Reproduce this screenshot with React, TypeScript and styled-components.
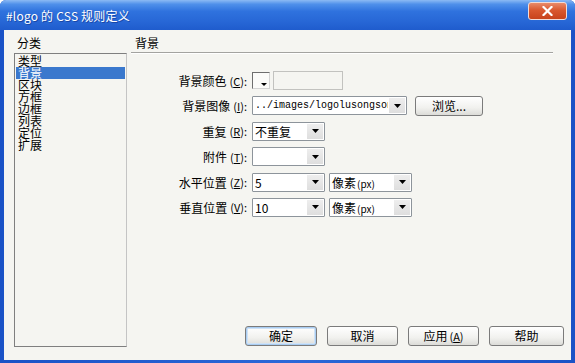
import React, { FC } from "react";
import styled, { createGlobalStyle } from "styled-components";

//styles
const GlobalStyle = createGlobalStyle`
    html, body {
        margin: 0;
        padding: 0;
    }
    body {
        width: 575px;
        height: 363px;
        overflow: hidden;
        background: #ffffff;
        font-family: "Noto Sans CJK SC", "Liberation Sans", sans-serif;
        font-size: 12px;
        color: #000;
    }
`
const Window = styled.div`
    width: 575px;
    height: 363px;
    display: flex;
    flex-direction: column;
    background: linear-gradient(to right, #1a52c6, #2b68d8 50%, #1a52c6);
    border-radius: 6px 6px 0 0;
    overflow: hidden;
`
const TitleBar = styled.div`
    height: 30px;
    flex: none;
    display: flex;
    justify-content: space-between;
    align-items: flex-start;
    padding: 0 8px 0 6px;
    background: linear-gradient(to bottom, #8cbaf4 0%, #4f90ea 14%, #2f72de 38%, #2767d6 72%, #1f5ccd 100%);
    color: #ffffff;
`
const Title = styled.div`
    margin-top: 9px;
    line-height: 14px;
    letter-spacing: 0.2px;
    text-shadow: 1px 1px 0 rgba(10, 40, 120, 0.5);
`
const CloseButton = styled.div`
    width: 39px;
    height: 18px;
    margin-top: 2px;
    box-sizing: border-box;
    border: 1px solid #f2dcd6;
    border-radius: 3px;
    background: linear-gradient(to bottom, #e98b6a 0%, #d9582f 45%, #c8431c 100%);
    display: flex;
    justify-content: center;
    align-items: center;
`
const Body = styled.div`
    flex: 1;
    margin: 0 4px 3px;
    background: #f5f5f1;
    display: flex;
    padding: 7px 0 0 10px;
`
const LeftColumn = styled.div`
    width: 113px;
    display: flex;
    flex-direction: column;
`
const SectionLabel = styled.div<{ $indent?: number }>`
    line-height: 12px;
    height: 12px;
    padding-left: ${(p) => p.$indent ?? 0}px;
`
const ListBox = styled.div`
    margin-top: 4px;
    height: 294px;
    box-sizing: border-box;
    border: 1px solid;
    border-color: #7f7f7f #c4c4c4 #7f7f7f #7f7f7f;
    background: #f5f5f1;
    padding: 1px 1px 0;
`
const ListItem = styled.div<{ $selected?: boolean }>`
    height: 12px;
    line-height: 12px;
    padding-left: 2px;
    background: ${(p) => (p.$selected ? "#3a78cd" : "transparent")};
    color: ${(p) => (p.$selected ? "#ffffff" : "#000000")};
`
const RightColumn = styled.div`
    flex: 1;
    margin-left: 4px;
    display: flex;
    flex-direction: column;
`
const Divider = styled.div`
    margin: 3px 18px 0 0;
    border-top: 1px solid #a3a3a0;
    border-bottom: 1px solid #ffffff;
`
const Form = styled.div`
    margin-top: 17px;
    display: grid;
    grid-template-columns: 116px auto;
    grid-auto-rows: 19px;
    column-gap: 5px;
    row-gap: 6.4px;
    justify-content: start;
`
const FieldLabel = styled.div`
    display: flex;
    justify-content: flex-end;
    align-items: center;
    white-space: nowrap;
`
const Key = styled.span`
    margin-left: 3px;
    font-size: 11px;
`
const Controls = styled.div`
    display: flex;
    align-items: center;
    gap: 4px;
`
const Swatch = styled.div`
    position: relative;
    width: 18px;
    height: 17px;
    box-sizing: border-box;
    border: 1px solid;
    border-color: #6e6e6e #d4d4d4 #d4d4d4 #6e6e6e;
    background: #fbfbf9;
`
const SwatchArrow = styled.span`
    position: absolute;
    right: 2px;
    bottom: 2px;
    width: 0;
    height: 0;
    border-left: 3px solid transparent;
    border-right: 3px solid transparent;
    border-top: 3px solid #000;
`
const ColorInput = styled.div`
    width: 70px;
    height: 19px;
    margin-left: -1px;
    box-sizing: border-box;
    border: 1px solid #c2c2bf;
    background: #f5f5f1;
`
const ComboBox = styled.div<{ $width: number }>`
    width: ${(p) => p.$width}px;
    height: 19px;
    box-sizing: border-box;
    border: 1px solid #8d949b;
    border-radius: 1px;
    background: #ffffff;
    display: flex;
    align-items: stretch;
`
const ComboText = styled.div<{ $mono?: boolean }>`
    flex: 1;
    overflow: hidden;
    white-space: nowrap;
    padding-left: 2px;
    line-height: 17px;
    font-family: ${(p) => (p.$mono ? '"Liberation Mono", monospace' : 'inherit')};
    font-size: ${(p) => (p.$mono ? "10px" : "12px")};
`
const Unit = styled.span`
    font-size: 10px;
    margin-left: 1px;
`
const DropButton = styled.div`
    width: 16px;
    margin: 1px;
    background: linear-gradient(to bottom, #eeeeee, #dedede);
    display: flex;
    justify-content: center;
    align-items: center;
`
const PushButton = styled.div<{ $width: number; $default?: boolean }>`
    width: ${(p) => p.$width}px;
    height: 20px;
    box-sizing: border-box;
    border: 1px solid #7b7b7b;
    border-radius: 3px;
    background: linear-gradient(to bottom, #ffffff 0%, #f1f1ee 60%, #dcdcd8 100%);
    box-shadow: ${(p) => (p.$default ? "inset 0 0 0 1px #a9cdf2, inset 0 0 0 2px #cfe2f6" : "none")};
    display: flex;
    justify-content: center;
    align-items: center;
    line-height: 12px;
`
const Spacer = styled.div`
    flex: 1;
`
const ButtonRow = styled.div`
    display: flex;
    justify-content: flex-end;
    gap: 10px;
    padding-right: 7px;
    margin-bottom: 14px;
`

const categories = ["类型", "背景", "区块", "方框", "边框", "列表", "定位", "扩展"];

const Arrow: FC = () => (
    <svg width="7" height="4" viewBox="0 0 7 4">
        <path d="M0 0h7L3.5 4z" fill="#000" />
    </svg>
);

interface ComboProps {
    width: number;
    value?: React.ReactNode;
    mono?: boolean;
}

const Combo: FC<ComboProps> = (props) => {
    return (
        <ComboBox $width={props.width}>
            <ComboText $mono={props.mono}>{props.value}</ComboText>
            <DropButton>
                <Arrow />
            </DropButton>
        </ComboBox>
    );
}

const Label: FC<{ text: string; keyChar: string }> = (props) => {
    return (
        <FieldLabel>
            {props.text}
            <Key>
                (<u>{props.keyChar}</u>):
            </Key>
        </FieldLabel>
    );
}

const PixelUnit = (
    <>
        像素<Unit>(px)</Unit>
    </>
);

const App: FC = () => {
    return (
        <>
            <GlobalStyle />
            <Window>
                <TitleBar>
                    <Title>#logo 的 CSS 规则定义</Title>
                    <CloseButton>
                        <svg width="11" height="10" viewBox="0 0 11 10">
                            <path d="M1.5 1l8 8M9.5 1l-8 8" stroke="#ffffff" strokeWidth="2.2" strokeLinecap="square" />
                        </svg>
                    </CloseButton>
                </TitleBar>
                <Body>
                    <LeftColumn>
                        <SectionLabel $indent={3}>分类</SectionLabel>
                        <ListBox>
                            {categories.map((c) => (
                                <ListItem key={c} $selected={c === "背景"}>
                                    {c}
                                </ListItem>
                            ))}
                        </ListBox>
                    </LeftColumn>
                    <RightColumn>
                        <SectionLabel $indent={4}>背景</SectionLabel>
                        <Divider />
                        <Form>
                            <Label text="背景颜色" keyChar="C" />
                            <Controls>
                                <Swatch>
                                    <SwatchArrow />
                                </Swatch>
                                <ColorInput />
                            </Controls>

                            <Label text="背景图像" keyChar="I" />
                            <Controls>
                                <Combo width={155} value="../images/logolusongsong.gif" mono />
                                <PushButton $width={68} style={{ marginLeft: 4 }}>浏览...</PushButton>
                            </Controls>

                            <Label text="重复" keyChar="R" />
                            <Controls>
                                <Combo width={73} value="不重复" />
                            </Controls>

                            <Label text="附件" keyChar="T" />
                            <Controls>
                                <Combo width={73} />
                            </Controls>

                            <Label text="水平位置" keyChar="Z" />
                            <Controls>
                                <Combo width={73} value="5" />
                                <Combo width={83} value={PixelUnit} />
                            </Controls>

                            <Label text="垂直位置" keyChar="V" />
                            <Controls>
                                <Combo width={73} value="10" />
                                <Combo width={83} value={PixelUnit} />
                            </Controls>
                        </Form>
                        <Spacer />
                        <ButtonRow>
                            <PushButton $width={72} $default>确定</PushButton>
                            <PushButton $width={71}>取消</PushButton>
                            <PushButton $width={71}>
                                应用<Key style={{ marginLeft: 2 }}>(<u>A</u>)</Key>
                            </PushButton>
                            <PushButton $width={75}>帮助</PushButton>
                        </ButtonRow>
                    </RightColumn>
                </Body>
            </Window>
        </>
    );
}

export default App;
